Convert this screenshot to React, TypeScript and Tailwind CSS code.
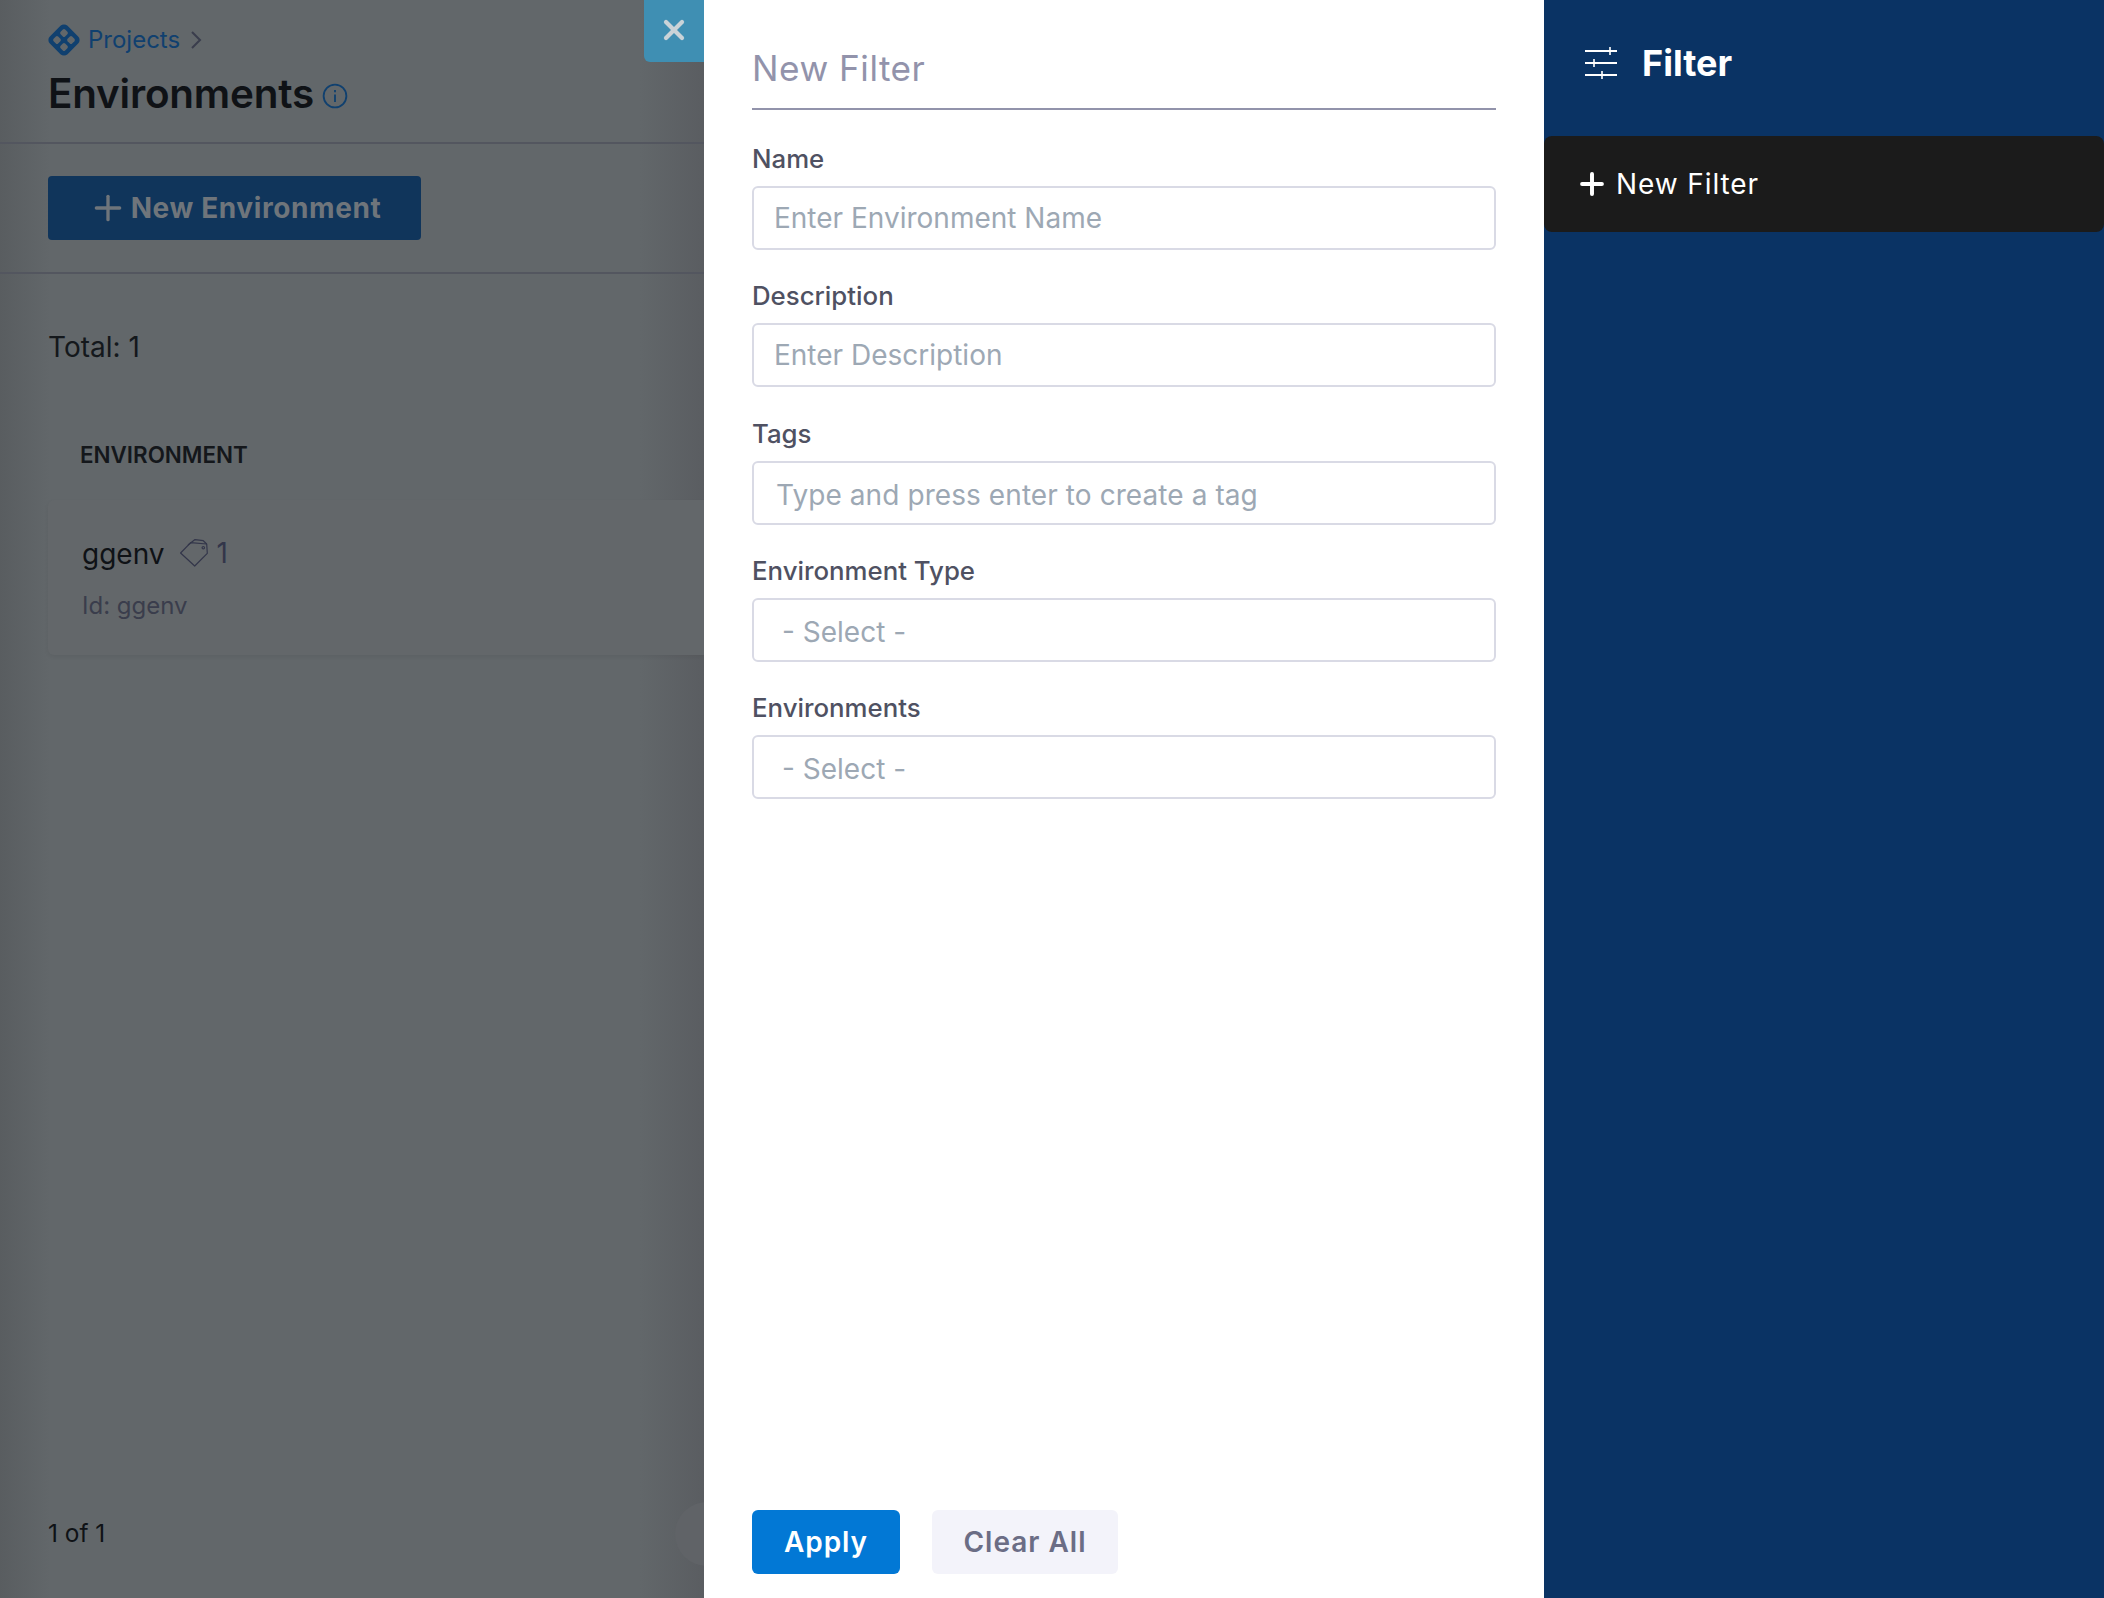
import React from "react";
import { Plus, X } from "lucide-react";

const inter = { fontFamily: "Inter, 'Liberation Sans', sans-serif" };

function Logo() {
  return (
    <svg width="32" height="32" viewBox="0 0 32 32" className="shrink-0">
      <rect x="3.5" y="3.5" width="25" height="25" rx="5" transform="rotate(45 16 16)" fill="#10406f" />
      <rect x="12.8" y="5.8" width="6.4" height="6.4" rx="1.6" transform="rotate(45 16 9)" fill="#62676a" />
      <rect x="12.8" y="19.8" width="6.4" height="6.4" rx="1.6" transform="rotate(45 16 23)" fill="#62676a" />
      <rect x="5.8" y="12.8" width="6.4" height="6.4" rx="1.6" transform="rotate(45 9 16)" fill="#62676a" />
      <rect x="19.8" y="12.8" width="6.4" height="6.4" rx="1.6" transform="rotate(45 23 16)" fill="#62676a" />
    </svg>
  );
}

function TagIcon() {
  return (
    <svg width="28" height="28" viewBox="0 0 28 28" fill="none" stroke="#33364a" strokeWidth="1.2" strokeLinejoin="round" className="shrink-0">
      <path d="M0.6 14L10.7 3.7L26.7 5L27.3 14.3L14.7 27Z" />
      <path d="M8 6L15 0.6L23.3 1.7L26.7 5" />
      <circle cx="23.3" cy="8.7" r="1.2" />
    </svg>
  );
}

function SlidersIcon() {
  return (
    <svg width="32" height="32" viewBox="0 0 32 32" stroke="#ffffff" strokeWidth="2" className="shrink-0">
      <path d="M0 4h32M0 16h32M0 28h32" />
      <path d="M25 0v8M9 12v8M17 24v8" strokeWidth="1.6" />
    </svg>
  );
}

function Field({ label, placeholder, textClass, extra = "" }: { label: string; placeholder: string; textClass: string; extra?: string }) {
  return (
    <div className={"flex flex-col " + extra}>
      <div className="flex h-[73px] items-center pt-[19px] text-[25.8px] leading-none font-medium text-[#4f5162]">{label}</div>
      <div className="flex h-[64px] items-center rounded-[6px] border-2 border-[#d9dae5] bg-white text-[28px] text-[#9da8b4]">
        <span className={textClass}>{placeholder}</span>
      </div>
    </div>
  );
}

export default function App() {
  return (
    <div style={inter} className="flex h-[1598px] w-[2104px] overflow-hidden">
      <div className="relative flex h-full w-[704px] shrink-0 flex-col overflow-hidden bg-[linear-gradient(90deg,#595d60_0px,#62676a_50px,#62676a_640px,#5a5d61_704px)]">
        <div className="flex h-[144px] shrink-0 flex-col border-b-2 border-[#53565f] pl-[48px]">
          <div className="mt-[24px] flex h-[32px] items-center">
            <Logo />
            <span className="ml-[8px] text-[24px] leading-none text-[#10406f]">Projects</span>
            <svg width="12" height="20" viewBox="0 0 12 20" fill="none" stroke="#3a3d4c" strokeWidth="2" className="ml-[10px]">
              <path d="M2 2l8 8-8 8" />
            </svg>
          </div>
          <div className="mt-[14px] flex h-[48px] items-center">
            <span className="text-[40.4px] leading-none font-semibold tracking-[-0.2px] text-[#0f1216]">Environments</span>
            <svg width="26" height="26" viewBox="0 0 24 24" fill="none" stroke="#10406f" strokeWidth="1.7" className="mt-[4px] ml-[8px]">
              <circle cx="12" cy="12" r="10.5" />
              <path d="M12 10.5v7M12 6.5v2" />
            </svg>
          </div>
        </div>
        <div className="flex h-[130px] shrink-0 items-start border-b-2 border-[#53565f] pt-[32px] pl-[48px]">
          <div className="flex h-[64px] w-[373px] items-center justify-center rounded-[4px] bg-[#10355b] text-[28px] font-bold tracking-[0.6px] text-[#6f757b]">
            <Plus size={40} strokeWidth={2} className="mr-[3px]" />
            New Environment
          </div>
        </div>
        <div className="mt-[55px] pl-[48px] text-[28px] leading-[36px] text-[#14181c]">Total: 1</div>
        <div className="mt-[76px] pl-[80px] text-[22.4px] leading-[28px] font-semibold text-[#14171b]">ENVIRONMENT</div>
        <div className="mt-[31px] ml-[48px] flex h-[155px] flex-col rounded-l-[6px] bg-[#63676a] pl-[34px] shadow-[0_2px_4px_rgba(0,0,0,0.06)]">
          <div className="mt-[34px] flex h-[40px] items-center">
            <span className="text-[28px] leading-none text-[#0f1216]">ggenv</span>
            <span className="-mt-[2px] ml-[15px]"><TagIcon /></span>
            <span className="-mt-[2px] ml-[9px] text-[28px] leading-none text-[#33364a]">1</span>
          </div>
          <div className="mt-[17px] text-[24px] leading-[30px] text-[#3a3d4c]">Id: ggenv</div>
        </div>
        <div className="mt-auto mb-[48px] pl-[48px] text-[24.4px] leading-[34px] text-[#0f1216]">1 of 1</div>
        <div className="absolute top-[1502px] left-[675px] h-[64px] w-[64px] rounded-full bg-[#606367]"></div>
        <div className="absolute top-0 right-0 flex h-[62px] w-[60px] items-center justify-center rounded-bl-[6px] bg-[#3f8fb3]">
          <X size={32} strokeWidth={3.2} color="#c9d3d8" className="-mt-[2px]" />
        </div>
      </div>

      <div className="flex h-full w-[840px] shrink-0 flex-col bg-white px-[48px]">
        <div className="flex h-[110px] shrink-0 items-center border-b-2 border-[#9293ab] pt-[46px] pb-[16px] text-[35.2px] leading-none tracking-[0.5px] text-[#9293ab]">New Filter</div>
        <div className="mt-[3px] flex flex-col">
          <Field label="Name" placeholder="Enter Environment Name" textClass="pl-[20px]" />
          <Field label="Description" placeholder="Enter Description" textClass="pl-[20px]" />
          <Field label="Tags" extra="mt-[1px]" placeholder="Type and press enter to create a tag" textClass="pl-[22px] pt-[4px] tracking-[0.08px]" />
          <Field label="Environment Type" placeholder="- Select -" textClass="pl-[28px] pt-[3px]" />
          <Field label="Environments" placeholder="- Select -" textClass="pl-[28px] pt-[3px]" />
        </div>
        <div className="mt-auto mb-[24px] flex gap-[32px]">
          <div className="flex h-[64px] w-[148px] items-center justify-center rounded-[6px] bg-[#0278d5] text-[28px] font-semibold tracking-[0.9px] text-white">Apply</div>
          <div className="flex h-[64px] w-[186px] items-center justify-center rounded-[6px] bg-[#f3f3fa] text-[28px] font-semibold tracking-[1px] text-[#6b6d85]">Clear All</div>
        </div>
      </div>

      <div className="flex h-full w-[560px] shrink-0 flex-col bg-[#0a3364]">
        <div className="flex h-[136px] items-start pt-[47px] pl-[41px]">
          <SlidersIcon />
          <span className="ml-[25px] text-[36px] leading-[32px] font-bold text-white">Filter</span>
        </div>
        <div className="flex h-[96px] items-center rounded-[8px] bg-[#1b1b1b] pl-[31px] text-[28px] tracking-[0.9px] text-white">
          <Plus size={34} strokeWidth={2.8} className="mr-[7px]" />
          New Filter
        </div>
      </div>
    </div>
  );
}
